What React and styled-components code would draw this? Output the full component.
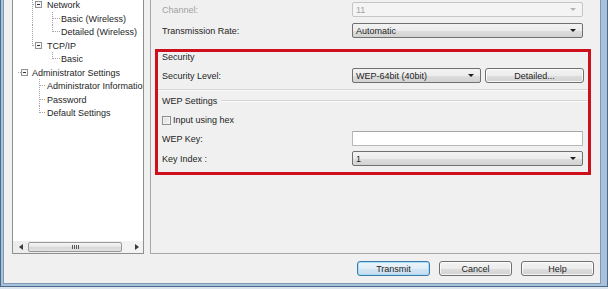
import React from 'react';
import styled, { createGlobalStyle } from 'styled-components';

const GlobalStyle = createGlobalStyle`
  html, body {
    margin: 0;
    padding: 0;
    background: #dbe5ef;
  }
  body {
    font-family: "Liberation Sans", Arial, sans-serif;
    font-size: 9px;
    color: #1e1e1e;
  }
`;

// window chrome: dark outer line, light blue frame, inner line
const Frame = styled.div`
  width: 608px;
  height: 287px;
  box-sizing: border-box;
  border-style: solid;
  border-width: 0 1px 1px 1px;
  border-color: #4d6a8b;
  overflow: hidden;
`;

const Chrome = styled.div`
  height: 100%;
  box-sizing: border-box;
  border-style: solid;
  border-width: 0 6px 2px 2px;
  border-color: #aac1da;
`;

const Client = styled.div`
  height: 100%;
  box-sizing: border-box;
  border-style: solid;
  border-width: 0 1px 1px 1px;
  border-color: #7f9ab8;
  background: #f0f0f0;
  display: flex;
  flex-direction: column;
`;

const Body = styled.div`
  display: flex;
  height: 254px;
  flex: none;
`;

const TreePanel = styled.div`
  width: 132px;
  margin-left: 8px;
  box-sizing: border-box;
  border: 1px solid #8e8f8f;
  border-top: none;
  background: #fff;
  display: flex;
  flex-direction: column;
  flex: none;
`;

const TreeList = styled.div`
  flex: 1;
  overflow: hidden;
  margin-top: -1.75px;
`;

const TreeRow = styled.div`
  display: flex;
  align-items: center;
  height: 13.5px;
  white-space: nowrap;
`;

const Gutter = styled.svg`
  flex: none;
  height: 13.5px;
`;

const Scrollbar = styled.div`
  height: 12px;
  display: flex;
  align-items: center;
  background: linear-gradient(90deg, #ececec, #f4f4f4);
  flex: none;
`;

const ScrollArrow = styled.div`
  width: ${p => p.$w}px;
  height: 12px;
  display: flex;
  align-items: center;
  justify-content: center;
  flex: none;
`;

const Thumb = styled.div`
  width: 94px;
  height: 10px;
  box-sizing: border-box;
  border: 1px solid #989898;
  border-radius: 2px;
  background: linear-gradient(#f6f6f6, #e6e6e6 50%, #d7d7d7 51%, #e2e2e2);
  display: flex;
  align-items: center;
  justify-content: center;
  flex: none;
`;

const Grip = styled.div`
  width: 7px;
  height: 4px;
  background: repeating-linear-gradient(90deg, #5a5a5a 0 1px, transparent 1px 2px);
`;

const Content = styled.div`
  flex: 1;
  margin-left: 6px;
  border-left: 1px solid #a7a7a7;
  border-bottom: 1px solid #a7a7a7;
  display: flex;
  flex-direction: column;
`;

const Row = styled.div`
  display: flex;
  align-items: center;
  height: 15px;
  margin-top: ${p => p.$mt || 0}px;
  padding-left: ${p => p.$pl || 0}px;
  flex: none;
`;

const Label = styled.span`
  width: 190px;
  flex: none;
  color: ${p => (p.$disabled ? '#a2a2a2' : '#1e1e1e')};
`;

const Combo = styled.div`
  width: ${p => p.$w || 231}px;
  height: 15px;
  box-sizing: border-box;
  border: 1px solid ${p => (p.$disabled ? '#c3c6c9' : '#707070')};
  border-radius: 2px;
  background: ${p =>
    p.$disabled
      ? '#f4f4f4'
      : 'linear-gradient(#f3f3f3, #ececec 50%, #dedede 51%, #d2d2d2)'};
  color: ${p => (p.$disabled ? '#a2a2a2' : '#1e1e1e')};
  display: flex;
  align-items: center;
  justify-content: space-between;
  padding: 0 6px 0 3px;
  flex: none;
`;

const Arrow = styled.span`
  width: 0;
  height: 0;
  border-left: 3px solid transparent;
  border-right: 3px solid transparent;
  border-top: 3px solid ${p => (p.$disabled ? '#b5b5b5' : '#1a1a1a')};
`;

const TextBox = styled.div`
  width: 231px;
  height: 15px;
  box-sizing: border-box;
  border: 1px solid #b5b8bd;
  border-top-color: #a4a7ac;
  border-radius: 1px;
  background: #fff;
  flex: none;
`;

const Button = styled.div`
  width: ${p => p.$w || 73}px;
  height: 15px;
  margin-left: ${p => p.$ml || 0}px;
  box-sizing: border-box;
  border: 1px solid ${p => (p.$primary ? '#3d7bad' : '#707070')};
  border-radius: 3px;
  background: ${p =>
    p.$primary
      ? 'linear-gradient(#ebf4fa, #e2eef7 50%, #d3e5f2 51%, #c6dcee)'
      : 'linear-gradient(#f3f3f3, #ececec 50%, #dedede 51%, #d2d2d2)'};
  box-shadow: inset 0 0 0 1px ${p => (p.$primary ? '#a8dcf5' : 'rgba(255,255,255,0.8)')};
  display: flex;
  align-items: center;
  justify-content: center;
  flex: none;
`;

const RedBox = styled.div`
  margin: 11px 0 0 4px;
  width: 436px;
  box-sizing: border-box;
  border: 3px solid #cf0f1b;
  padding: 0 5px 6px 4px;
  display: flex;
  flex-direction: column;
`;

const GroupTitle = styled.div`
  display: flex;
  align-items: center;
  height: 10px;
  margin-top: ${p => p.$mt || 0}px;
  margin-right: -5px;
  gap: 4px;
  flex: none;
`;

const TitleLine = styled.div`
  flex: 1;
  height: 0;
  margin-top: -1px;
  border-top: 1px solid #d5d5d5;
  border-bottom: 1px solid #fbfbfb;
`;

const Separator = styled.div`
  height: 0;
  margin: 6px -5px 0 -4px;
  border-top: 1px solid #d5d5d5;
  border-bottom: 1px solid #fbfbfb;
  flex: none;
`;

const CheckRow = styled.label`
  display: flex;
  align-items: center;
  gap: 2px;
  height: 12px;
  margin-top: 8px;
  flex: none;
`;

const CheckBox = styled.span`
  width: 9px;
  height: 9px;
  box-sizing: border-box;
  border: 1px solid #8f8f8f;
  background: linear-gradient(135deg, #dcdcdc, #f6f6f6);
  box-shadow: inset 0 0 0 1px #f2f2f2;
  flex: none;
`;

const Footer = styled.div`
  flex: 1;
  display: flex;
  justify-content: flex-end;
  align-items: flex-start;
  gap: 9px;
  padding: 7px 6px 0 0;
`;

const Spacer = styled.div`
  flex: 1;
`;

const C = 6.75;

const treeItems = [
  { label: 'Network', w: 34, box: 22, lines: [[19, 0, 19, 13.5], [19, C, 22, C], [39, 10, 39, 13.5]] },
  { label: 'Basic (Wireless)', w: 48, lines: [[19, 0, 19, 13.5], [39, 0, 39, 13.5], [39, C, 46, C]] },
  { label: 'Detailed (Wireless)', w: 48, lines: [[19, 0, 19, 13.5], [39, 0, 39, C], [39, C, 46, C]] },
  { label: 'TCP/IP', w: 34, box: 22, lines: [[19, 0, 19, C], [19, C, 22, C], [39, 10, 39, 13.5]] },
  { label: 'Basic', w: 48, lines: [[39, 0, 39, C], [39, C, 46, C]] },
  { label: 'Administrator Settings', w: 19, box: 8, lines: [[4, C, 8, C], [26, 10, 26, 13.5]] },
  { label: 'Administrator Information', w: 34, lines: [[26, 0, 26, 13.5], [26, C, 32, C]] },
  { label: 'Password', w: 34, lines: [[26, 0, 26, 13.5], [26, C, 32, C]] },
  { label: 'Default Settings', w: 34, lines: [[26, 0, 26, C], [26, C, 32, C]] },
];

function TreeItem({ item }) {
  return (
    <TreeRow>
      <Gutter width={item.w} height="13.5" shapeRendering="crispEdges">
        {item.lines.map(([x1, y1, x2, y2], i) => (
          <line key={i} x1={x1 + 0.5} y1={y1} x2={x2 + 0.5} y2={y2}
            stroke="#a3a3a3" strokeDasharray="1 1" />
        ))}
        {item.box !== undefined && (
          <g>
            <rect x={item.box + 0.5} y={3.5} width={6} height={6} fill="#f7f7f7" stroke="#929292" />
            <line x1={item.box + 2} y1={6.5} x2={item.box + 5} y2={6.5} stroke="#333" />
          </g>
        )}
      </Gutter>
      {item.label}
    </TreeRow>
  );
}

function Triangle({ dir }) {
  const d = dir === 'left' ? 'M4 0 L0 3 L4 6 Z' : 'M0 0 L4 3 L0 6 Z';
  return (
    <svg width="4" height="6" viewBox="0 0 4 6">
      <path d={d} fill="#3a3a3a" />
    </svg>
  );
}

export default function App() {
  return (
    <>
      <GlobalStyle />
      <Frame>
        <Chrome>
          <Client>
            <Body>
              <TreePanel>
                <TreeList>
                  {treeItems.map(item => (
                    <TreeItem key={item.label + item.w} item={item} />
                  ))}
                </TreeList>
                <Scrollbar>
                  <ScrollArrow $w={15}><Triangle dir="left" /></ScrollArrow>
                  <Thumb><Grip /></Thumb>
                  <Spacer />
                  <ScrollArrow $w={13}><Triangle dir="right" /></ScrollArrow>
                </Scrollbar>
              </TreePanel>

              <Content>
                <Row $mt={2} $pl={11}>
                  <Label $disabled>Channel:</Label>
                  <Combo $disabled>11<Arrow $disabled /></Combo>
                </Row>
                <Row $mt={6} $pl={11}>
                  <Label>Transmission Rate:</Label>
                  <Combo>Automatic<Arrow /></Combo>
                </Row>

                <RedBox>
                  <GroupTitle>Security</GroupTitle>
                  <Row $mt={6}>
                    <Label>Security Level:</Label>
                    <Combo $w={129}>WEP-64bit (40bit)<Arrow /></Combo>
                    <Button $w={99} $ml={4}>Detailed...</Button>
                  </Row>
                  <Separator />
                  <GroupTitle $mt={5}>
                    WEP Settings
                    <TitleLine />
                  </GroupTitle>
                  <CheckRow>
                    <CheckBox />
                    Input using hex
                  </CheckRow>
                  <Row $mt={5}>
                    <Label>WEP Key:</Label>
                    <TextBox />
                  </Row>
                  <Row $mt={5}>
                    <Label>Key Index :</Label>
                    <Combo>1<Arrow /></Combo>
                  </Row>
                </RedBox>
              </Content>
            </Body>

            <Footer>
              <Button $primary>Transmit</Button>
              <Button>Cancel</Button>
              <Button>Help</Button>
            </Footer>
          </Client>
        </Chrome>
      </Frame>
    </>
  );
}
